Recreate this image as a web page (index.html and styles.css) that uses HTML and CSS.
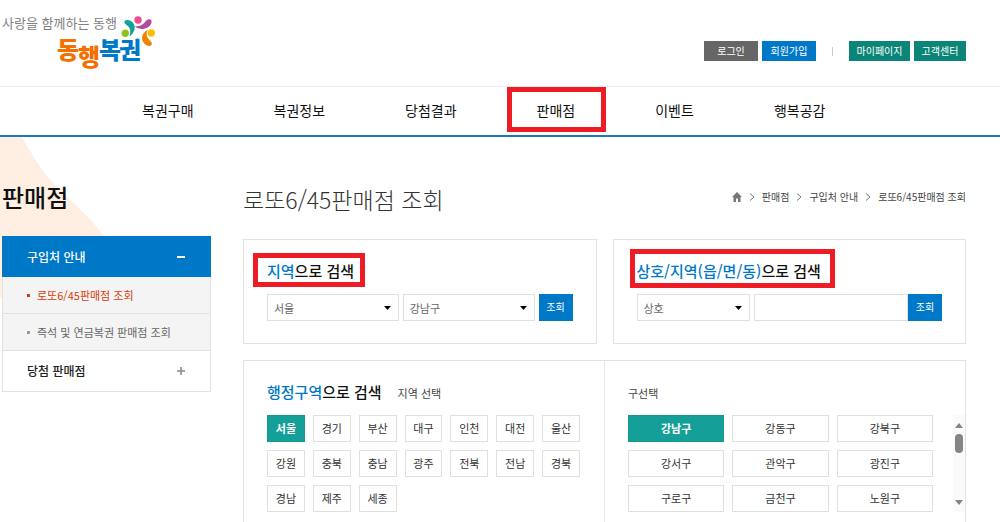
FILE: index.html
```html
<!DOCTYPE html>
<html lang="ko">
<head>
<meta charset="utf-8">
<title>동행복권 - 판매점 조회</title>
<link rel="stylesheet" href="styles.css">
</head>
<body>
<header class="header">
  <a class="logo" href="#" aria-label="동행복권">
    <svg width="160" height="72" viewBox="0 0 160 72">
      <text class="logo-slogan" x="2" y="28">사랑을 함께하는 동행</text>
      <text class="logo-name logo-orange" x="57" y="59">동</text>
      <text class="logo-name logo-orange" x="78" y="66">행</text>
      <text class="logo-name logo-blue" x="99" y="59">복</text>
      <text class="logo-name logo-blue" x="119" y="59">권</text>
      <circle cx="138" cy="20" r="3.7" fill="#ee4f8c"/>
      <circle cx="125.300" cy="33.300" r="3.700" fill="#8dc21f"/>
      <circle cx="151.300" cy="33" r="3.700" fill="#fdbc00"/>
      <path d="M125 20.500C129 18.500 134.500 22 134.700 27C134.800 31 132.500 34.500 129.500 36.500C131 31 130.500 27.500 126.500 25C124.500 23.500 123.500 21.500 125 20.500Z" fill="#12a299"/>
      <path d="M134.500 26C139 27 142.500 25.500 145.500 21.500C147 19 150 18.500 151.500 20.500C152.500 25.500 146.500 29.500 141.500 29C138.500 28.700 136 27.500 134.500 26Z" fill="#b5499b"/>
      <path d="M147.500 30C142.500 32.500 140.500 38 143.500 42.500C145.500 45.500 149.500 47 151.500 45C153 42.500 149.500 40.500 147.800 38C146.200 35.500 146.500 32.500 147.500 30Z" fill="#f08300"/>
    </svg>
  </a>
  <div class="user-menu">
    <button class="pill pill-gray" type="button">로그인</button>
    <button class="pill pill-blue" type="button">회원가입</button>
    <span class="user-divider"></span>
    <button class="pill pill-green" type="button">마이페이지</button>
    <button class="pill pill-green pill-narrow" type="button">고객센터</button>
  </div>
</header>
<nav class="nav">
  <a href="#">복권구매</a>
  <a href="#">복권정보</a>
  <a href="#">당첨결과</a>
  <a class="marked marked-nav" href="#">판매점</a>
  <a href="#">이벤트</a>
  <a href="#">행복공감</a>
</nav>
<div class="page">
  <svg class="page-shape" width="104" height="160" viewBox="0 0 104 160" aria-hidden="true">
    <path d="M0 0H22C30 14 37 26 47 39C65 60 88 77 104 99L104 130L2 160H0Z" fill="#feefe2"/>
  </svg>
  <aside class="sidebar">
    <h2 class="sidebar-title">판매점</h2>
    <ul class="menu">
      <li><a class="menu-item menu-open" href="#">구입처 안내
        <svg width="10" height="10" viewBox="0 0 10 10"><path d="M1 5H9" stroke="#fff" stroke-width="2"/></svg></a></li>
      <li><a class="menu-sub menu-current" href="#">로또6/45판매점 조회</a></li>
      <li><a class="menu-sub" href="#">즉석 및 연금복권 판매점 조회</a></li>
      <li><a class="menu-item" href="#">당첨 판매점
        <svg width="10" height="10" viewBox="0 0 10 10"><path d="M1 5H9M5 1V9" stroke="#888" stroke-width="1.500"/></svg></a></li>
    </ul>
  </aside>
  <main class="main">
    <div class="main-head">
      <h1 class="main-title">로또6/45판매점 조회</h1>
      <div class="crumbs">
        <a href="#" aria-label="홈"><svg width="10" height="10" viewBox="0 0 10 10"><path d="M5 0L10 5H8.500V10H6V6.500H4V10H1.500V5H0Z" fill="#777"/></svg></a>
        <svg class="chevron" width="6" height="8" viewBox="0 0 6 8"><path d="M1 0.500L5 4L1 7.500"/></svg>
        <a href="#">판매점</a>
        <svg class="chevron" width="6" height="8" viewBox="0 0 6 8"><path d="M1 0.500L5 4L1 7.500"/></svg>
        <a href="#">구입처 안내</a>
        <svg class="chevron" width="6" height="8" viewBox="0 0 6 8"><path d="M1 0.500L5 4L1 7.500"/></svg>
        <a href="#">로또6/45판매점 조회</a>
      </div>
    </div>
    <div class="searches">
      <form class="panel search">
        <h3 class="panel-title marked marked-region"><em>지역</em>으로 검색</h3>
        <div class="fields">
          <select class="field" aria-label="시/도"><option>서울</option></select>
          <select class="field" aria-label="구/군"><option>강남구</option></select>
          <button class="submit" type="button">조회</button>
        </div>
      </form>
      <form class="panel search">
        <h3 class="panel-title marked marked-name"><em>상호/지역(읍/면/동)</em>으로 검색</h3>
        <div class="fields">
          <select class="field field-kind" aria-label="검색 구분"><option>상호</option></select>
          <div class="joined">
            <input class="field" type="text" aria-label="검색어">
            <button class="submit" type="button">조회</button>
          </div>
        </div>
      </form>
    </div>
    <div class="panel areas">
      <section class="area area-region">
        <div class="area-head"><h3 class="panel-title"><em>행정구역</em>으로 검색</h3><span class="area-label">지역 선택</span></div>
        <div class="options options-region">
          <button class="option selected" type="button">서울</button>
          <button class="option" type="button">경기</button>
          <button class="option" type="button">부산</button>
          <button class="option" type="button">대구</button>
          <button class="option" type="button">인천</button>
          <button class="option" type="button">대전</button>
          <button class="option" type="button">울산</button>
          <button class="option" type="button">강원</button>
          <button class="option" type="button">충북</button>
          <button class="option" type="button">충남</button>
          <button class="option" type="button">광주</button>
          <button class="option" type="button">전북</button>
          <button class="option" type="button">전남</button>
          <button class="option" type="button">경북</button>
          <button class="option" type="button">경남</button>
          <button class="option" type="button">제주</button>
          <button class="option" type="button">세종</button>
        </div>
      </section>
      <section class="area area-district">
        <div class="area-head"><span class="area-label">구선택</span></div>
        <div class="district-list">
          <div class="options options-district">
            <button class="option selected" type="button">강남구</button>
            <button class="option" type="button">강동구</button>
            <button class="option" type="button">강북구</button>
            <button class="option" type="button">강서구</button>
            <button class="option" type="button">관악구</button>
            <button class="option" type="button">광진구</button>
            <button class="option" type="button">구로구</button>
            <button class="option" type="button">금천구</button>
            <button class="option" type="button">노원구</button>
          </div>
          <div class="scrollbar" aria-hidden="true">
            <svg width="8" height="5" viewBox="0 0 8 5"><path d="M4 0L8 5H0Z" fill="#858585"/></svg>
            <span class="thumb"></span>
            <svg width="8" height="5" viewBox="0 0 8 5"><path d="M0 0H8L4 5Z" fill="#858585"/></svg>
          </div>
        </div>
      </section>
    </div>
  </main>
</div>
</body>
</html>
```
FILE: styles.css
```css
* { box-sizing: border-box; }
body {
  margin: 0;
  min-height: 100vh;
  display: flex;
  flex-direction: column;
  background: #fff;
  color: #333;
  font: 11px/16px "Noto Sans CJK KR", "Noto Sans", sans-serif;
}
a { color: inherit; text-decoration: none; }
h1, h2, h3, ul { margin: 0; padding: 0; font-weight: 400; }
ul { list-style: none; }
em { font-style: normal; color: #0078c8; }
svg { display: block; flex: none; }
button, select, input { font: inherit; color: inherit; margin: 0; border-radius: 0; }
button { padding: 0; border: 0; cursor: pointer; }

.header {
  display: flex;
  justify-content: space-between;
  align-items: flex-start;
  height: 87px;
  padding-right: 34px;
  border-bottom: 1px solid #eee;
}
.logo-slogan { font-size: 13px; fill: #808080; }
.logo-name { font-size: 24px; font-weight: 900; }
.logo-orange { fill: #f56e00; }
.logo-blue { fill: #0078c8; }
.user-menu { display: flex; align-items: center; gap: 4px; padding-top: 41px; }
.pill { height: 20px; width: 54px; padding-bottom: 1px; color: #fff; font-size: 10px; }
.pill-gray { background: #666; }
.pill-blue { background: #0078c8; }
.pill-green { width: 61px; background: #0a8578; }
.pill-narrow { width: 52px; }
.user-divider { width: 1px; height: 9px; margin: 0 12px; background: #ccc; }

.nav {
  display: flex;
  align-items: center;
  gap: 80px;
  height: 50px;
  padding: 0 0 2px 142px;
  border-bottom: 2px solid #1878c0;
  color: #111;
  font-size: 14px;
  line-height: 20px;
}

.marked { position: relative; }
.marked::after { content: ""; position: absolute; border: 5px solid #ee1c25; }
.marked-nav::after { inset: -13px -31px -12px -30px; }
.marked-region::after { inset: -6px -11px -4px -14px; }
.marked-name::after { inset: -10px -14px -5px -7px; }

.page {
  position: relative;
  flex: 1;
  display: flex;
  gap: 32px;
  padding: 0 34px 0 2px;
}
.page-shape { position: absolute; left: 0; top: 0; z-index: -1; }
.sidebar { width: 209px; flex: none; padding-top: 44px; }
.sidebar-title { color: #111; font-size: 24px; line-height: 32px; font-weight: 500; }
.menu { margin-top: 23px; border: 1px solid #e2e2e2; border-top: 0; background: #fff; }
.menu-item {
  display: flex;
  align-items: center;
  justify-content: space-between;
  height: 40px;
  padding: 0 24px;
  color: #222;
  font-size: 12px;
  font-weight: 500;
}
.menu-open { height: 41px; margin: 0 -1px; padding: 0 25px; background: #0078c8; color: #fff; }
.menu-sub {
  display: flex;
  align-items: center;
  gap: 7px;
  height: 37px;
  padding-left: 24px;
  border-bottom: 1px solid #e2e2e2;
  background: #f4f4f4;
  color: #666;
}
.menu-sub::before { content: ""; width: 3px; height: 3px; background: #999; }
.menu-current { color: #d73c0a; }
.menu-current::before { background: #d73c0a; }

.main { flex: 1; min-width: 0; display: flex; flex-direction: column; padding-top: 44px; }
.main-head { display: flex; justify-content: space-between; align-items: center; }
.main-title { color: #333; font-size: 23px; line-height: 36px; font-weight: 300; }
.crumbs { display: flex; align-items: center; gap: 7px; padding-bottom: 4px; color: #444; font-size: 10px; }
.chevron { fill: none; stroke: #777; }

.panel { border: 1px solid #e2e2e2; background: #fff; }
.panel-title { color: #111; font-size: 15px; line-height: 24px; font-weight: 500; }
.searches { display: grid; grid-template-columns: 1fr 1fr; gap: 16px; margin-top: 22px; }
.search { display: flex; flex-direction: column; align-items: flex-start; padding: 19px 23px 22px; }
.fields { display: flex; gap: 4px; width: 100%; margin-top: 11px; }
.field {
  flex: 1;
  min-width: 0;
  height: 27px;
  padding: 0 6px;
  border: 1px solid #e0e0e0;
  background: #fff;
  color: #666;
  appearance: none;
}
select.field {
  background: url("data:image/svg+xml,%3Csvg xmlns='http://www.w3.org/2000/svg' width='7' height='4'%3E%3Cpath d='M0 0H7L3.500 4Z'/%3E%3C/svg%3E") no-repeat right 7px center;
}
.field-kind { flex: 0 0 113px; }
.joined { flex: 1; min-width: 0; display: flex; }
.submit { flex: none; width: 34px; height: 27px; padding-bottom: 1px; background: #0078c8; color: #fff; font-size: 10px; }

.areas { flex: 1; display: grid; grid-template-columns: 360px 1fr; margin-top: 16px; border-bottom: 0; }
.area { padding: 19px 0 10px 23px; }
.area-region { padding-right: 24px; }
.area-district { border-left: 1px solid #e8e8e8; }
.area-head { display: flex; align-items: center; gap: 16px; height: 24px; }
.area-label { padding-top: 2px; color: #444; }
.options { display: grid; gap: 8px; margin-top: 11px; }
.options-region { grid-template-columns: repeat(7, 1fr); }
.options-district { flex: 1; grid-template-columns: repeat(3, 1fr); margin: 0; }
.option { height: 27px; padding-bottom: 2px; border: 1px solid #e0e0e0; background: #fff; color: #333; }
.selected { border-color: #12988f; background: #14a098; color: #fff; font-weight: 700; }
.district-list { display: flex; gap: 20px; margin-top: 11px; }
.scrollbar {
  display: flex;
  flex-direction: column;
  align-items: center;
  gap: 6px;
  width: 12px;
  padding: 8px 0 7px;
  background: #fafafa;
}
.scrollbar svg:last-child { margin-top: auto; }
.thumb { width: 8px; height: 19px; border-radius: 4px; background: #858585; }
```
